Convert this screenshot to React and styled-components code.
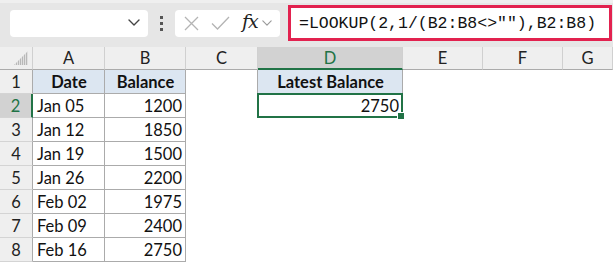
import React from 'react';
import styled, { createGlobalStyle, css } from 'styled-components';

const GlobalStyle = createGlobalStyle`
  html, body {
    margin: 0;
    padding: 0;
    background: #ffffff;
  }
`;

const green = '#217346';
const gridLine = '#ababab';

const columns = [
  { key: 'A', width: 72 },
  { key: 'B', width: 81 },
  { key: 'C', width: 72 },
  { key: 'D', width: 145, selected: true },
  { key: 'E', width: 80 },
  { key: 'F', width: 80 },
  { key: 'G', width: 50 },
];

const data = [
  ['Jan 05', 1200],
  ['Jan 12', 1850],
  ['Jan 19', 1500],
  ['Jan 26', 2200],
  ['Feb 02', 1975],
  ['Feb 09', 2400],
  ['Feb 16', 2750],
];

const ChevronDown = ({ size = 12, color = '#333' }) => (
  <svg width={size} height={size * 0.6} viewBox="0 0 12 7" fill="none">
    <path d="M1 1l5 5 5-5" stroke={color} strokeWidth="1.4" strokeLinecap="round" strokeLinejoin="round" />
  </svg>
);

const CrossIcon = () => (
  <svg width="15" height="15" viewBox="0 0 15 15" fill="none">
    <path d="M1 1l13 13M14 1L1 14" stroke="#b4b4b4" strokeWidth="1.3" />
  </svg>
);

const CheckIcon = () => (
  <svg width="19" height="14" viewBox="0 0 19 14" fill="none">
    <path d="M1 7.5l5.5 5.5L18 1" stroke="#b4b4b4" strokeWidth="1.3" />
  </svg>
);

const App = () => {
  const rows = [['Date', 'Balance', null, 'Latest Balance'], ...data.map((d, i) => [d[0], d[1], null, i === 0 ? 2750 : null])];

  return (
    <>
      <GlobalStyle />
      <Window>
        <Toolbar>
          <NameBox>
            <ChevronDown size={12} color="#444" />
          </NameBox>
          <Dots>
            <span />
            <span />
            <span />
          </Dots>
          <IconBox>
            <CrossIcon />
            <CheckIcon />
            <Fx>fx</Fx>
            <ChevronDown size={10} color="#9a9a9a" />
          </IconBox>
          <FormulaBar>=LOOKUP(2,1/(B2:B8&lt;&gt;""),B2:B8)</FormulaBar>
        </Toolbar>

        <Sheet $cols={columns.map((c) => c.width)}>
          <Corner>
            <CornerMark />
          </Corner>
          {columns.map((c) => (
            <ColHeader key={c.key} $selected={c.selected}>
              {c.key}
            </ColHeader>
          ))}

          {rows.map((row, r) => (
            <React.Fragment key={r}>
              <RowHeader $selected={r === 1}>{r + 1}</RowHeader>
              {columns.map((c, ci) => {
                const value = row[ci];
                const inTable = ci < 2 || (ci === 3 && r === 0);
                const isHead = r === 0 && value != null;
                const isActive = ci === 3 && r === 1;
                return (
                  <Cell
                    key={c.key}
                    $grid={inTable}
                    $head={isHead}
                    $num={typeof value === 'number'}
                    $leftLine={ci === 3 && r === 0}
                    $active={isActive}
                  >
                    {value}
                    {isActive && <FillHandle />}
                  </Cell>
                );
              })}
            </React.Fragment>
          ))}
        </Sheet>
      </Window>
    </>
  );
};

export default App;

const Window = styled.div`
  width: 613px;
  height: 264px;
  overflow: hidden;
  background: #ffffff;
  font-family: Lato, 'Open Sans', sans-serif;
`;

const Toolbar = styled.div`
  height: 47px;
  box-sizing: border-box;
  background: #e6e6e6;
  border-top: 3px solid #efefef;
  display: flex;
  align-items: center;
  padding: 0 1px 0 10px;
`;

const NameBox = styled.div`
  width: 138px;
  height: 27px;
  box-sizing: border-box;
  background: #ffffff;
  border-radius: 4px;
  display: flex;
  align-items: center;
  justify-content: flex-end;
  padding-right: 8px;
  margin-top: -4px;
`;

const Dots = styled.div`
  width: 27px;
  display: flex;
  flex-direction: column;
  align-items: center;
  gap: 3px;
  margin-top: -4px;

  span {
    width: 3px;
    height: 3px;
    background: #555;
  }
`;

const IconBox = styled.div`
  width: 105px;
  height: 27px;
  box-sizing: border-box;
  background: #ffffff;
  border-radius: 4px;
  display: flex;
  align-items: center;
  padding: 0 4px 0 9px;
  margin-top: -4px;

  svg:nth-child(2) {
    margin-left: 12px;
  }
  svg:last-child {
    margin-left: 4px;
  }
`;

const Fx = styled.span`
  font-family: 'DejaVu Serif', 'Liberation Serif', serif;
  font-style: italic;
  font-size: 19px;
  color: #222;
  margin-left: 12px;
  line-height: 1;
  margin-top: -3px;
  letter-spacing: -1px;
`;

const FormulaBar = styled.div`
  flex: 1;
  margin-left: 8px;
  height: 36px;
  box-sizing: border-box;
  border: 3px solid #e2224f;
  background: #ffffff;
  display: flex;
  align-items: center;
  padding-left: 8px;
  margin-top: -4px;
  font-family: 'Liberation Mono', monospace;
  font-size: 16.5px;
  color: #111;
  white-space: nowrap;
`;

const Sheet = styled.div`
  display: grid;
  grid-template-columns: 33px ${(p) => p.$cols.map((w) => `${w}px`).join(' ')};
  grid-template-rows: 23px repeat(8, 24px);
`;

const headerBase = css`
  box-sizing: border-box;
  background: #efefef;
  color: #222;
  font-size: 16.5px;
  display: flex;
  align-items: center;
  justify-content: center;
`;

const Corner = styled.div`
  ${headerBase};
  border-right: 1px solid #d0d0d0;
  border-bottom: 1px solid ${gridLine};
  position: relative;
`;

const CornerMark = styled.div`
  position: absolute;
  right: 4px;
  bottom: 4px;
  width: 14px;
  height: 14px;
  background: repeating-linear-gradient(90deg, #b8b8b8 0 1px, #e0e0e0 1px 2px);
  clip-path: polygon(100% 0, 100% 100%, 0 100%);
`;

const ColHeader = styled.div`
  ${headerBase};
  border-right: 1px solid #d0d0d0;
  border-bottom: 1px solid ${gridLine};

  ${(p) =>
    p.$selected &&
    css`
      background: #d2d2d2;
      color: ${green};
      border-bottom: 2px solid ${green};
    `}
`;

const RowHeader = styled.div`
  ${headerBase};
  border-right: 1px solid ${gridLine};
  border-bottom: 1px solid #d4d4d4;

  ${(p) =>
    p.$selected &&
    css`
      background: #d2d2d2;
      color: ${green};
      border-right: 2px solid ${green};
    `}
`;

const Cell = styled.div`
  box-sizing: border-box;
  position: relative;
  font-size: 16.5px;
  color: #111;
  display: flex;
  align-items: center;
  padding: 0 3px 0 4px;
  white-space: nowrap;
  justify-content: ${(p) => (p.$head ? 'center' : p.$num ? 'flex-end' : 'flex-start')};

  ${(p) =>
    p.$grid &&
    css`
      border-right: 1px solid ${gridLine};
      border-bottom: 1px solid ${gridLine};
    `}

  ${(p) =>
    p.$leftLine &&
    css`
      border-left: 1px solid ${gridLine};
      margin-left: -1px;
    `}

  ${(p) =>
    p.$head &&
    css`
      background: #dce6f1;
      font-weight: 700;
    `}

  ${(p) =>
    p.$active &&
    css`
      border: 2px solid ${green};
      margin: -1px 0 0 -1px;
      padding-right: 2px;
    `}
`;

const FillHandle = styled.span`
  position: absolute;
  right: -4px;
  bottom: -4px;
  width: 6px;
  height: 6px;
  background: ${green};
  border: 1px solid #ffffff;
`;
